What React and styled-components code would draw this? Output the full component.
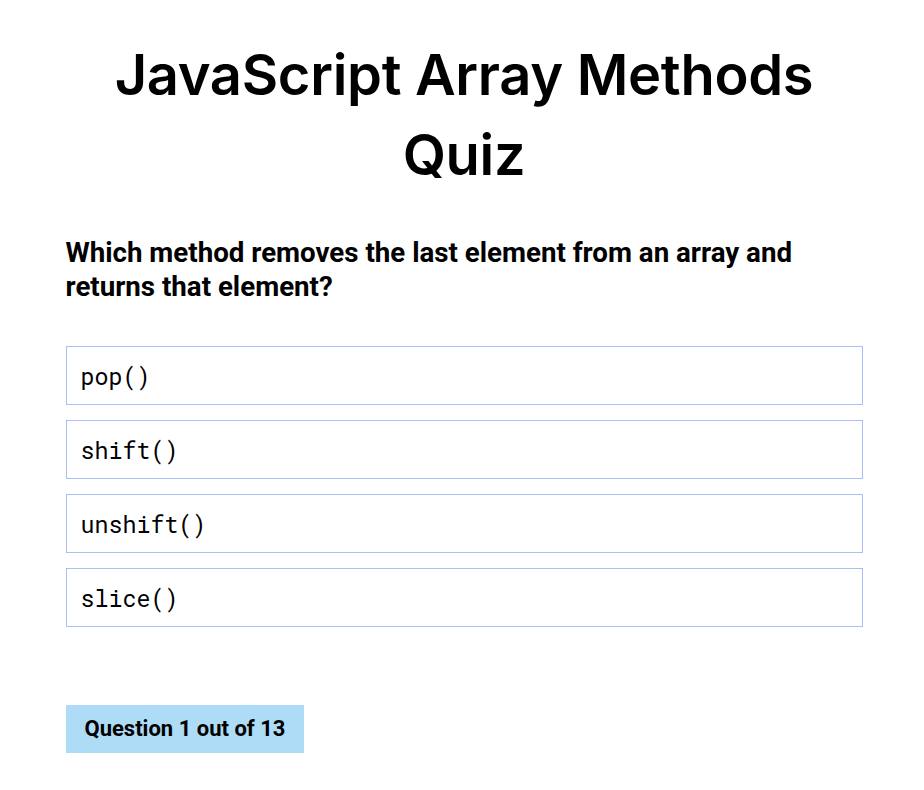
import styled, { createGlobalStyle } from 'styled-components';

const GlobalStyle = createGlobalStyle`
  body {
    margin: 0;
    background: #ffffff;
    font-family: Roboto, 'Liberation Sans', sans-serif;
    color: #000;
  }
`;

const Page = styled.div`
  width: 797px;
  margin: 0 auto;
  padding: 35px 0 0 4px;
`;

const Title = styled.h1`
  margin: 0 0 41px;
  font-family: Inter, 'Noto Sans', sans-serif;
  font-weight: 600;
  font-size: 56px;
  line-height: 80px;
  letter-spacing: -0.3px;
  text-align: center;
`;

const Question = styled.h2`
  margin: 0 0 42px;
  font-family: Roboto, sans-serif;
  font-weight: 700;
  font-size: 27.7px;
  line-height: 34px;
`;

const Options = styled.ul`
  list-style: none;
  margin: 0;
  padding: 0;
  display: flex;
  flex-direction: column;
  gap: 15px;
`;

const Option = styled.li`
  box-sizing: border-box;
  height: 59px;
  display: flex;
  align-items: center;
  padding: 0 14px;
  border: 1px solid #a9bff7;
  font-family: 'Roboto Mono', 'DejaVu Sans Mono', monospace;
  font-size: 23.3px;
`;

const Progress = styled.div`
  display: inline-block;
  margin-top: 78px;
  padding: 12px 19px;
  background: #aedcf6;
  font-family: Roboto, sans-serif;
  font-weight: 700;
  font-size: 22px;
  line-height: 24px;
`;

const options = ['pop()', 'shift()', 'unshift()', 'slice()'];

export default function App() {
  return (
    <>
      <GlobalStyle />
      <Page>
        <Title>JavaScript Array Methods Quiz</Title>
        <Question>
          Which method removes the last element from an array and returns that element?
        </Question>
        <Options>
          {options.map((o) => (
            <Option key={o}>{o}</Option>
          ))}
        </Options>
        <Progress>Question 1 out of 13</Progress>
      </Page>
    </>
  );
}
